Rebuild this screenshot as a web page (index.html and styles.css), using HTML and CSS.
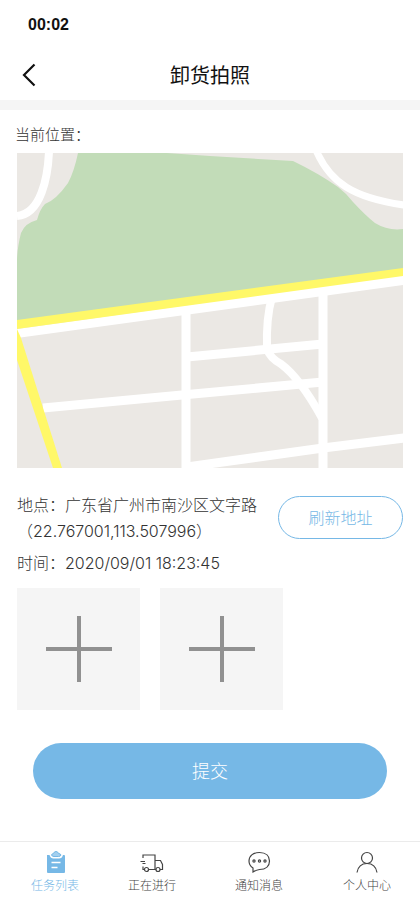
FILE: index.html
```
<!DOCTYPE html>
<html lang="zh-CN">
<head>
  <meta charset="UTF-8">
  <meta name="viewport" content="width=device-width, initial-scale=1.0">
  <title>卸货拍照</title>
  <link rel="stylesheet" href="styles.css">
</head>
<body>
  <div class="status-bar">00:02</div>

  <header class="header">
    <button class="back-btn" type="button" aria-label="返回">
      <svg width="14" height="24" viewBox="0 0 14 24">
        <path d="M12.5 1.5 L2 12 L12.5 22.5" fill="none" stroke="#111" stroke-width="2.2"/>
      </svg>
    </button>
    <h1>卸货拍照</h1>
  </header>

  <main class="content">
    <h2 class="section-title">当前位置：</h2>

    <svg class="map" viewBox="0 0 386 315" role="img" aria-label="地图">
      <rect width="386" height="315" fill="#ebe8e4"/>
      <!-- park -->
      <path d="M61 0 Q57 19 51 30 Q39 47 28 51 Q23 56 20 67 Q8 70 4 80 Q0 96 0 108 V168 L386 116 V76 Q371 78 358 70 Q349 63 336 49 Q329 40 321 34 Q301 20 276 8 L193 3 L150 0 Z" fill="#c2dcb8"/>
      <!-- side streets -->
      <g fill="none" stroke="#fff" stroke-width="9">
        <path d="M32 -2 C31 24 24 61 0 63" stroke-width="8"/>
        <path d="M299 -3 C313 30 337 45 387 52" stroke-width="7"/>
        <path d="M169 158 V315"/>
        <path d="M306 138 V315"/>
        <path d="M170 204 L306 191"/>
        <path d="M26 255 L165 242 L306 229"/>
        <path d="M170 314 L306 295 L387 285"/>
        <path d="M255 144 Q249 165 250 196 Q253 205 264 211 Q283 225 305 265" stroke-width="8"/>
      </g>
      <!-- main roads -->
      <path d="M0 176 L386 122 V132 L0 185 Z" fill="#fff"/>
      <path d="M0 167 L386 115 V123 L0 176 Z" fill="#fff868"/>
      <path d="M0 176 L4 185 L45 315 H36 L0 207 Z" fill="#fff868"/>
    </svg>

    <div class="location">
      <div class="location-text">
        <p>地点：广东省广州市南沙区文字路</p>
        <p>（22.767001,113.507996）</p>
      </div>
      <button class="refresh-btn" type="button">刷新地址</button>
    </div>
    <p class="time">时间：2020/09/01 18:23:45</p>

    <div class="photos">
      <button class="photo-btn" type="button" aria-label="添加照片">
        <svg width="66" height="66" viewBox="0 0 66 66"><path d="M33 0 V66 M0 33 H66" stroke="#919191" stroke-width="4"/></svg>
      </button>
      <button class="photo-btn" type="button" aria-label="添加照片">
        <svg width="66" height="66" viewBox="0 0 66 66"><path d="M33 0 V66 M0 33 H66" stroke="#919191" stroke-width="4"/></svg>
      </button>
    </div>

    <button class="submit-btn" type="button">提交</button>
  </main>

  <nav class="tab-bar">
    <a href="#" class="tab active">
      <svg width="24" height="24" viewBox="0 0 24 24">
        <path d="M4 5 H6.5 Q7.5 8.5 10.5 8.5 H16 Q19 8.5 20 5 H21 Q22 5 22 6 V22 Q22 23 21 23 H5 Q4 23 4 22 V6 Q4 5 4 5 Z" fill="#76b8e6"/>
        <path d="M8.5 5 Q9 3.5 10.5 3.5 Q11 1.5 13 1.5 Q15 1.5 15.5 3.5 Q17.5 3.5 18 5 Q17.5 6.5 15.5 6.5 H11 Q9 6.500 8.5 5 Z" fill="#a4d0ef" stroke="#76b8e6"/>
        <path d="M8.5 12.5 H17.5 M8.5 17.5 H14.500" stroke="#fff" stroke-width="1.3"/>
      </svg>
      <span>任务列表</span>
    </a>
    <a href="#" class="tab">
      <svg width="24" height="24" viewBox="0 0 24 24" fill="none" stroke="#444" stroke-width="1.2">
        <path d="M3 8 V5 H15 V19.5 M3 16.5 V19.5 H4.5 M8.5 19.5 H16 M20 19.5 H22.5 V14.5 L20.5 10.5 H15 M0.5 11.5 H5 M2.5 13.5 H5.5"/>
        <circle cx="6.5" cy="19.5" r="2"/>
        <circle cx="18" cy="19.5" r="2"/>
      </svg>
      <span>正在进行</span>
    </a>
    <a href="#" class="tab">
      <svg width="24" height="24" viewBox="0 0 24 24" fill="none" stroke="#444" stroke-width="1.2">
        <path d="M6 22 V18 Q2 15.5 2 11 C2 6 6 2.5 12.5 2.5 C19 2.5 22.5 6 22.5 11 C22.5 16 19 19.5 12.5 19.5 Q9 20 6 22 Z"/>
        <circle cx="7" cy="11" r="1.1"/>
        <circle cx="12.5" cy="11" r="1.1"/>
        <circle cx="18" cy="11" r="1.1"/>
      </svg>
      <span>通知消息</span>
    </a>
    <a href="#" class="tab">
      <svg width="24" height="24" viewBox="0 0 24 24" fill="none" stroke="#444" stroke-width="1.2">
        <circle cx="12" cy="8" r="5.5"/>
        <path d="M2 22.5 Q3.5 13.5 12 13.5 Q20.5 13.5 22 22.5"/>
      </svg>
      <span>个人中心</span>
    </a>
  </nav>
</body>
</html>
```
FILE: styles.css
```
* {
  box-sizing: border-box;
}
body {
  margin: 0;
  min-height: 100vh;
  display: flex;
  flex-direction: column;
  background: #fff;
  color: #333;
  font-family: Inter, "Noto Sans CJK SC", sans-serif;
  font-weight: 300;
  font-size: 16px;
  line-height: 26px;
}
h1, h2, p {
  margin: 0;
}
button {
  padding: 0;
  border: none;
  background: none;
  font: inherit;
  cursor: pointer;
}
svg {
  display: block;
}
.status-bar {
  padding: 12px 28px;
  color: #111;
  font-family: "Liberation Sans", sans-serif;
  font-weight: bold;
}
.header {
  display: grid;
  grid-template-columns: 1fr auto 1fr;
  align-items: center;
  height: 60px;
  padding: 0 22px;
  border-bottom: 10px solid #f5f5f5;
}
.back-btn {
  justify-self: start;
}
.header h1 {
  padding-top: 2px;
  color: #111;
  font-size: 20px;
  font-weight: 400;
}
.content {
  padding: 12px 17px 20px;
}
.section-title {
  margin: 0 -2px 5px;
  font-size: 15px;
  font-weight: 300;
}
.map {
  width: 100%;
}
.location {
  display: flex;
  justify-content: space-between;
  margin-top: 24px;
}
.refresh-btn {
  flex-shrink: 0;
  width: 125px;
  height: 43px;
  margin-top: 4px;
  border: 1px solid #76b8e6;
  border-radius: 22px;
  color: #76b8e6;
}
.time {
  margin-top: 6px;
}
.photos {
  display: flex;
  gap: 20px;
  margin-top: 12px;
}
.photo-btn {
  display: flex;
  align-items: center;
  justify-content: center;
  width: 123px;
  height: 122px;
  background: #f5f5f5;
}
.submit-btn {
  display: block;
  width: calc(100% - 32px);
  height: 56px;
  margin: 33px auto 0;
  padding-top: 2px;
  border-radius: 28px;
  background: #76b8e6;
  color: #fff;
  font-size: 18px;
}
.tab-bar {
  display: grid;
  grid-template-columns: 110fr 84fr 130fr 86fr;
  margin-top: auto;
  padding: 8px 10px 7px 0;
  border-top: 1px solid #ebebeb;
}
.tab {
  display: flex;
  flex-direction: column;
  align-items: center;
  gap: 2px;
  color: #444;
  font-size: 12px;
  line-height: 20px;
  text-decoration: none;
}
.tab.active {
  color: #76b8e6;
}
```
